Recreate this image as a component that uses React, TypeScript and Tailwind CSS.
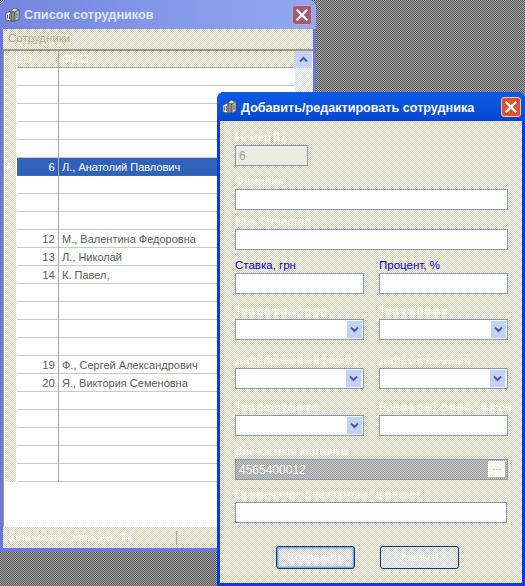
import type { ReactNode } from 'react'

const beige = 'bg-[url("data:image/svg+xml,%3Csvg%20xmlns=%27http://www.w3.org/2000/svg%27%20width=%272%27%20height=%272%27%3E%3Crect%20width=%272%27%20height=%272%27%20fill=%27%23fff%27/%3E%3Crect%20width=%271%27%20height=%271%27%20fill=%27%23d9d3b3%27/%3E%3Crect%20x=%271%27%20y=%271%27%20width=%271%27%20height=%271%27%20fill=%27%23d9d3b3%27/%3E%3C/svg%3E")]'
const grey = 'bg-[url("data:image/svg+xml,%3Csvg%20xmlns=%27http://www.w3.org/2000/svg%27%20width=%272%27%20height=%272%27%3E%3Crect%20width=%272%27%20height=%272%27%20fill=%27%23aaa%27/%3E%3Crect%20width=%271%27%20height=%271%27%20fill=%27%23555%27/%3E%3Crect%20x=%271%27%20y=%271%27%20width=%271%27%20height=%271%27%20fill=%27%23555%27/%3E%3C/svg%3E")]'
const btnDots = 'bg-[url("data:image/svg+xml,%3Csvg%20xmlns=%27http://www.w3.org/2000/svg%27%20width=%272%27%20height=%272%27%3E%3Crect%20width=%272%27%20height=%272%27%20fill=%27%23fff%27/%3E%3Crect%20width=%271%27%20height=%271%27%20fill=%27%23d2d2d2%27/%3E%3Crect%20x=%271%27%20y=%271%27%20width=%271%27%20height=%271%27%20fill=%27%23d2d2d2%27/%3E%3C/svg%3E")]'
const disabled = 'bg-[url("data:image/svg+xml,%3Csvg%20xmlns=%27http://www.w3.org/2000/svg%27%20width=%272%27%20height=%272%27%3E%3Crect%20width=%272%27%20height=%272%27%20fill=%27%23c8c8c8%27/%3E%3Crect%20width=%271%27%20height=%271%27%20fill=%27%23a0a0a0%27/%3E%3Crect%20x=%271%27%20y=%271%27%20width=%271%27%20height=%271%27%20fill=%27%23a0a0a0%27/%3E%3C/svg%3E")]'
const track = 'bg-[url("data:image/svg+xml,%3Csvg%20xmlns=%27http://www.w3.org/2000/svg%27%20width=%272%27%20height=%272%27%3E%3Crect%20width=%272%27%20height=%272%27%20fill=%27%23fff%27/%3E%3Crect%20width=%271%27%20height=%271%27%20fill=%27%23d8dcf0%27/%3E%3Crect%20x=%271%27%20y=%271%27%20width=%271%27%20height=%271%27%20fill=%27%23d8dcf0%27/%3E%3C/svg%3E")]'
const font = 'font-["Liberation_Sans",Arial,sans-serif]'

const rows: Record<number, [string, string]> = {
  5: ['6', 'Л., Анатолий Павлович'],
  9: ['12', 'М., Валентина Федоровна'],
  10: ['13', 'Л., Николай'],
  11: ['14', 'К. Павел,'],
  16: ['19', 'Ф., Сергей Александрович'],
  17: ['20', 'Я., Виктория Семеновна'],
}

function AppIcon() {
  return (
    <svg width="16" height="16" viewBox="0 0 16 16" className="shrink-0">
      <path d="M1 6l5-2v10l-5-1z" fill="#f4f4f4" stroke="#555" strokeWidth="0.8" />
      <path d="M6 4l4 1v9l-4 0z" fill="#8a8a8a" stroke="#444" strokeWidth="0.8" />
      <path d="M6 4l3-3 5 2-4 2z" fill="#dcdcdc" stroke="#555" strokeWidth="0.8" />
      <path d="M10 5l4-2v9l-4 2z" fill="#c4c4c4" stroke="#555" strokeWidth="0.8" />
      <path d="M2.5 7.5v4M4.5 7v5M12 6v5" stroke="#666" strokeWidth="1" />
    </svg>
  )
}

function CloseIcon() {
  return (
    <svg width="12" height="12" viewBox="0 0 12 12">
      <path d="M1.5 1.5l9 9M10.5 1.5l-9 9" stroke="#fff" strokeWidth="2.4" strokeLinecap="square" />
    </svg>
  )
}

function Chevron({ up }: { up?: boolean }) {
  return (
    <svg width="9" height="7" viewBox="0 0 9 7">
      <path d={up ? 'M1 5.5l3.5-3.5 3.5 3.5' : 'M1 1.5l3.5 3.5 3.5-3.5'} fill="none" stroke="#4d6185" strokeWidth="2" />
    </svg>
  )
}

function Field({ label, className, blue, children }: { label: string; className?: string; blue?: boolean; children: ReactNode }) {
  return (
    <div className={className}>
      <div className={`h-4 text-[11.5px] leading-4 whitespace-nowrap ${blue ? 'text-[#0000e0]' : 'text-[#fbfaf0]'}`}>{label}</div>
      {children}
    </div>
  )
}

function TextBox({ className, children }: { className?: string; children?: ReactNode }) {
  return (
    <div className={`flex h-[21px] items-center border border-[#7f9db9] bg-white px-[3px] text-[12px] ${className ?? ''}`}>
      {children}
    </div>
  )
}

function Combo({ nudge }: { nudge?: boolean }) {
  return (
    <div className={`flex h-[21px] items-center justify-end border border-[#7f9db9] bg-white ${nudge ? 'pr-[2px]' : 'pr-px'}`}>
      <div className="flex h-[17px] w-[15px] items-center justify-center bg-[#c3d2fa]">
        <Chevron />
      </div>
    </div>
  )
}

function EmployeeList() {
  return (
    <div className="absolute left-0 top-0 flex h-[552px] w-[316px] flex-col rounded-t-[7px] bg-[#6a78de] px-[3px] pb-1">
      <div className="-mx-[3px] flex h-[29px] shrink-0 items-center gap-[3px] rounded-t-[7px] bg-gradient-to-r from-[#7485de] to-[#93a8f2] pl-[5px] pr-1 pt-px">
        <AppIcon />
        <span className="pt-[2px] text-[12.7px] font-bold text-[#dfe5ff]">Список сотрудников</span>
        <div className="ml-auto flex h-[20px] w-[20px] items-center justify-center rounded-[3px] border border-[#c9a4b8] bg-[#a65a72]">
          <CloseIcon />
        </div>
      </div>
      <div className={`flex h-[20px] shrink-0 items-center pl-[5px] text-[11.5px] text-[#b3ab8c] ${beige}`}>Сотрудники</div>
      <div className="flex min-h-0 flex-1 flex-col border-l border-t-2 border-l-[#9a978a] border-t-[#9a978a] bg-white pl-px">
        <div className="flex h-[17px] shrink-0">
          <div className={`mr-px w-[11px] ${beige}`} />
          <div className={`w-[41px] border-b border-[#a8a8a0] pl-[3px] pt-px text-[12px] leading-[15px] text-[#fbfaf0] ${beige}`}>ID</div>
          <div className="w-px bg-[#a8a8a0]" />
          <div className={`flex-1 border-b border-[#a8a8a0] pl-[3px] pt-px text-[12px] leading-[15px] text-[#fbfaf0] ${beige}`}>ФИО</div>
          <div className="flex h-[17px] w-[17px] items-center justify-center bg-[#c3d2fa]">
            <Chevron up />
          </div>
          <div className="w-px" />
        </div>
        <div className="flex flex-1 flex-col">
          {Array.from({ length: 23 }, (_, i) => {
            const row = rows[i]
            const selected = i === 5
            return (
              <div key={i} className="flex h-[18px] shrink-0">
                <div className={`mr-px flex w-[11px] items-center pl-[2px] pb-px ${beige}`}>
                  {selected && <div className="h-0 w-0 border-y-[6px] border-l-[6px] border-y-transparent border-l-white" />}
                </div>
                <div className={`flex w-[41px] items-center justify-end border-b pr-[3px] pt-[2px] text-[11.5px] ${selected ? 'border-[#316ac5] bg-[#2f62b8] text-white' : 'border-[#c8c8c8] text-[#5c5c5c]'}`}>
                  {row?.[0]}
                </div>
                <div className={`w-px ${selected ? 'bg-[#9fb6dc]' : 'bg-[#a8a8a8]'}`} />
                <div className={`flex flex-1 items-center whitespace-nowrap border-b pl-[3px] pt-[2px] text-[11px] ${selected ? 'border-[#316ac5] bg-[#2f62b8] text-white' : 'border-[#c8c8c8] text-[#5c5c5c]'}`}>
                  {row?.[1]}
                </div>
                <div className={`w-[18px] ${track}`} />
              </div>
            )
          })}
        </div>
      </div>
      <div className={`flex h-[21px] shrink-0 items-center pl-[2px] text-[11.5px] text-[#fbfaf0] ${beige}`}>
        <span className="w-[171px] whitespace-nowrap">Количество записей: 24</span>
        <div className="h-[14px] w-px bg-[#b0ac98]" />
      </div>
    </div>
  )
}

function EmployeeDialog() {
  return (
    <div className="absolute left-[217px] top-[92px] flex h-[494px] w-[308px] flex-col rounded-t-[7px] bg-[#0a3be0] px-[3px] pb-[3px]">
      <div className="-mx-[3px] flex h-[29px] shrink-0 items-center gap-[3px] rounded-t-[7px] bg-gradient-to-b from-[#0a5ae8] via-[#0a52dc] to-[#0646d2] pl-[5px] pr-1 pt-px">
        <AppIcon />
        <span className="pt-[2px] text-[12.6px] font-bold text-white">Добавить/редактировать сотрудника</span>
        <div className="ml-auto flex h-[20px] w-[20px] items-center justify-center rounded-[3px] border border-[#f2c8b4] bg-[#e0512c]">
          <CloseIcon />
        </div>
      </div>
      <div className={`flex-1 pl-[15px] pr-[14px] ${beige}`}>
        <Field label="Номер ID:" className="mt-2 w-[73px]">
          <TextBox className="!bg-[#ecebdf] text-[#a8a490]">6</TextBox>
        </Field>
        <Field label="Фамилия" className="mt-[7px]"><TextBox /></Field>
        <Field label="Имя Отчество" className="mt-[3px]"><TextBox /></Field>
        <div className="mt-[7px] grid grid-cols-2 gap-x-[15px]">
          <Field label="Ставка, грн" blue><TextBox /></Field>
          <Field label="Процент, %" blue><TextBox /></Field>
        </div>
        <div className="mt-[9px] grid grid-cols-2 gap-x-[15px]">
          <Field label="Тип оплаты труда"><Combo /></Field>
          <Field label="Тип карточки"><Combo /></Field>
        </div>
        <div className="mt-[12px] grid grid-cols-2 gap-x-[15px]">
          <Field label="Дата приема на работу"><Combo nudge /></Field>
          <Field label="Дата увольнения"><Combo nudge /></Field>
        </div>
        <div className="mt-[10px] grid grid-cols-2 gap-x-[15px]">
          <Field label="Тип сотрудника"><Combo /></Field>
          <Field label="Время раб.смены, часов"><TextBox /></Field>
        </div>
        <Field label="Дисконтная карточка" className="mt-[7px]">
          <div className={`flex h-[21px] items-center justify-between border border-[#7f9db9] pl-[3px] pr-px text-[12px] text-[#f4f4f4] ${disabled}`}>
            4565400012
            <div className="flex h-[17px] w-[18px] items-start justify-center border border-white border-b-[#b8b490] border-r-[#b8b490] bg-[#f8f8f0] text-[10px] leading-[10px] text-[#a8a490]">...</div>
          </div>
        </Field>
        <Field label="Примечание (паспортные данные)" className="mt-[6px] mr-px"><TextBox /></Field>
        <div className="mt-[23px] flex justify-start gap-[25px] pl-[41px]">
          <button className={`flex h-[23px] w-[79px] items-center justify-center rounded-[3px] border border-[#003c74] text-[11.5px] text-[#fdfdf4] shadow-[inset_0_0_0_1.5px_#7aa7e6] ${btnDots}`}>Сохранить</button>
          <button className={`flex h-[23px] w-[79px] items-center justify-center rounded-[3px] border border-[#003c74] text-[11.5px] text-[#fdfdf4] ${btnDots}`}>Закрыть</button>
        </div>
      </div>
    </div>
  )
}

export default function App() {
  return (
    <div className={`relative h-[586px] w-[525px] overflow-hidden ${grey} ${font}`}>
      <EmployeeList />
      <EmployeeDialog />
    </div>
  )
}
